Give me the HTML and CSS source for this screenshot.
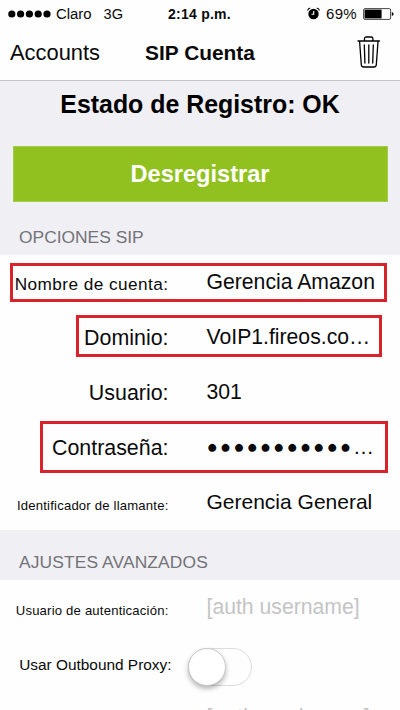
FILE: index.html
```html
<!DOCTYPE html>
<html lang="es">
<head>
<meta charset="utf-8">
<title>SIP Cuenta</title>
<link rel="stylesheet" href="styles.css">
</head>
<body>
<div class="status">
  <div class="carrier">
    <svg width="43" height="8" viewBox="0 0 43 8"><circle cx="3.8" cy="4" r="3.6"/><circle cx="12.6" cy="4" r="3.6"/><circle cx="21.4" cy="4" r="3.6"/><circle cx="30.2" cy="4" r="3.6"/><circle cx="39" cy="4" r="3.6"/></svg>
    <span class="name">Claro</span><span class="net">3G</span>
  </div>
  <div class="clock">2:14 p.m.</div>
  <div class="power">
    <svg width="13" height="13" viewBox="0 0 13 13"><circle cx="6.5" cy="7" r="5.2"/><path d="M.9 3.600A2 2 0 0 1 3.300 1.300M12.100 3.600A2 2 0 0 0 9.700 1.300" fill="none" stroke="#000" stroke-width="1.1"/><path d="M6.700 4v3.200H4.500" fill="none" stroke="#fff" stroke-width="1.1"/></svg>
    <span class="percent">69%</span>
    <svg width="32" height="12" viewBox="0 0 32 12"><rect x=".6" y=".6" width="27" height="10.8" rx="1.4" fill="#fff" stroke="#333" stroke-width=".9"/><rect x="1.600" y="1.600" width="17" height="8.800"/><path d="M28.800 4q1.800.3 1.800 2t-1.800 2z"/></svg>
  </div>
</div>
<header class="nav">
  <a class="back">Accounts</a>
  <h1>SIP Cuenta</h1>
  <svg class="trash" width="24" height="33" viewBox="0 0 24 33" fill="none" stroke="#000" stroke-width="1.300" stroke-linecap="round" stroke-linejoin="round"><path d="M1 5h21.500M7.500 4.500V2.600Q7.500 1 9.200 1h5Q15.900 1 15.900 2.600v1.900M2.600 5.500l1.700 23.200Q4.500 31 6.700 31h10.200q2.200 0 2.400-2.300L21 5.500M7.300 9l.6 18M11.800 9v18M16.300 9l-.6 18"/></svg>
</header>
<main>
  <section class="registration">
    <h2>Estado de Registro: OK</h2>
    <button>Desregistrar</button>
    <h3>OPCIONES SIP</h3>
  </section>
  <section class="rows">
    <div class="row"><label class="medium">Nombre de cuenta:</label><span class="value">Gerencia Amazon</span><i class="mark mark-name"></i></div>
    <div class="row"><label class="large">Dominio:</label><span class="value">VoIP1.fireos.co…</span><i class="mark mark-domain"></i></div>
    <div class="row"><label class="large">Usuario:</label><span class="value">301</span></div>
    <div class="row"><label class="large">Contraseña:</label><span class="value"><span class="secret">●●●●●●●●●●●</span><span class="dots">…</span></span><i class="mark mark-password"></i></div>
    <div class="row"><label class="small">Identificador de llamante:</label><span class="value general">Gerencia General</span></div>
  </section>
  <h3 class="advanced">AJUSTES AVANZADOS</h3>
  <section class="rows">
    <div class="row"><label class="small">Usuario de autenticación:</label><span class="value hint">[auth username]</span></div>
    <div class="row"><label class="proxy">Usar Outbound Proxy:</label><span class="switch"><span class="knob"></span></span></div>
    <div class="row"><label></label><span class="value hint outbound">[outbound proxy]</span></div>
  </section>
</main>
</body>
</html>
```
FILE: styles.css
```css
* { box-sizing: border-box; }
body {
  margin: 0;
  width: 400px;
  height: 710px;
  overflow: hidden;
  background: #fefefe;
  color: #0a0a0a;
  font-family: "Liberation Sans", Arial, sans-serif;
}
h1, h2, h3 { margin: 0; }
svg { display: block; flex: none; }

.status {
  display: grid;
  grid-template-columns: 150px 100px 150px;
  height: 27px;
  align-items: center;
  font-size: 14px;
}
.carrier, .power { display: flex; align-items: center; }
.carrier { padding-left: 8px; }
.name { margin-left: 5px; font-size: 14.9px; }
.net { margin-left: 12px; font-size: 14.6px; }
.clock { padding-left: 18px; font-weight: bold; font-size: 14px; letter-spacing: .25px; white-space: nowrap; }
.power { padding-left: 57px; }
.percent { width: 37px; margin-left: 6px; font-size: 15px; letter-spacing: .3px; }

.nav {
  display: grid;
  grid-template-columns: 120px 160px 120px;
  align-items: center;
  height: 54px;
  padding-bottom: 2px;
  border-bottom: 1px solid #c4c4c8;
}
.back { padding-left: 10px; font-size: 21.9px; }
.nav h1 { text-align: center; font-size: 20.9px; }
.trash { margin-left: 77px; }

.registration { height: 174px; background: #efeff4; overflow: hidden; }
.registration h2 {
  height: 37px;
  padding-top: 9px;
  line-height: 29px;
  font-size: 24.9px;
  text-align: center;
  color: #000;
  overflow: hidden;
}
button {
  display: block;
  width: 375px;
  height: 56px;
  margin: 28px 0 0 13px;
  padding: 0 1px 0 0;
  border: 1px solid #a3cc4c;
  background: #91c11e;
  color: #fff;
  font: bold 23.6px "Liberation Sans", Arial, sans-serif;
}
h3 {
  padding-left: 19px;
  font-size: 17.4px;
  font-weight: normal;
  color: #737378;
}
.registration h3 { margin-top: 25px; line-height: 20px; }
.advanced {
  height: 50px;
  padding-top: 14px;
  line-height: 36px;
  letter-spacing: .12px;
  background: #efeff4;
}

.row {
  position: relative;
  display: grid;
  grid-template-columns: 168.500px 1fr;
  column-gap: 38px;
  align-items: baseline;
  height: 55px;
  line-height: 53px;
  white-space: nowrap;
}
.row label { position: relative; top: 1px; text-align: right; }
.medium { font-size: 17.2px; letter-spacing: .45px; }
.large { font-size: 21.400px; }
.small { font-size: 13.1px; letter-spacing: .2px; }
.row .proxy { top: 3px; left: 3px; font-size: 15.400px; }
.value { font-size: 21.2px; }
.general { font-size: 21px; }
.hint { color: #c4c4c6; }
.outbound { letter-spacing: .35px; }
.secret {
  position: relative;
  top: -1px;
  font-size: 18.5px;
  letter-spacing: 2.150px;
}
.dots { font-size: 21px; }

.mark { position: absolute; border: 3px solid #d8232b; }
.mark-name { left: 10px; top: 8px; width: 377px; height: 39px; }
.mark-domain { left: 76px; top: 5px; width: 306px; height: 42px; }
.mark-password { left: 40px; top: 1px; width: 348px; height: 52px; }

.switch {
  align-self: start;
  width: 64px;
  height: 38px;
  margin: 13px 0 0 -19px;
  border: 1px solid #dcdcdc;
  border-radius: 19px;
}
.knob {
  display: block;
  width: 38px;
  height: 38px;
  margin: -1px;
  border: 1px solid #c9c9c9;
  border-radius: 50%;
  background: #fff;
  box-shadow: 0 3px 5px rgba(0, 0, 0, .28);
}
```
